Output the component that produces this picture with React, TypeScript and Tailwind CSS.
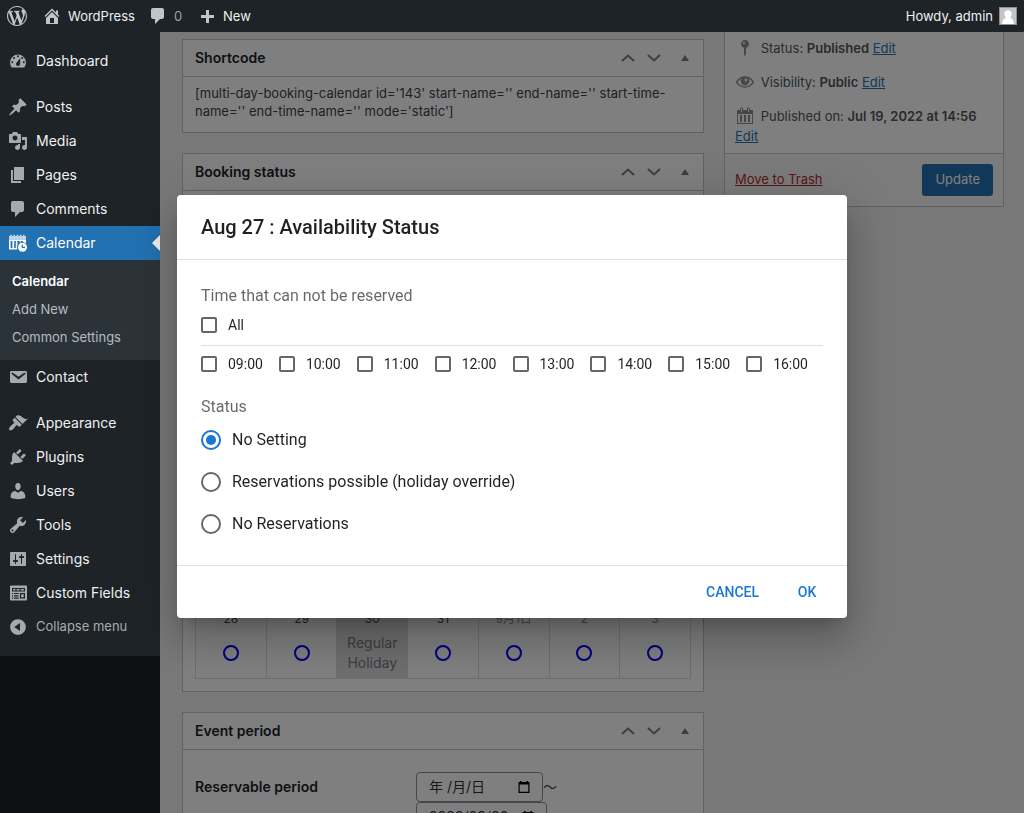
import { useState } from 'react'
import type { ReactNode } from 'react'

const icons = {
  wordpress:
    'M20 10c0-5.51-4.49-10-10-10C4.48 0 0 4.49 0 10c0 5.52 4.48 10 10 10 5.51 0 10-4.48 10-10zM7.78 15.37L4.37 6.22c.55-.02 1.17-.08 1.17-.08.5-.06.44-1.13-.06-1.11 0 0-1.45.11-2.37.11-.18 0-.37 0-.58-.01C4.12 2.69 6.87 1.11 10 1.11c2.33 0 4.45.87 6.05 2.34-.68-.11-1.65.39-1.65 1.58 0 .74.45 1.36.9 2.1.35.61.55 1.36.55 2.46 0 1.49-1.4 5-1.4 5l-3.03-8.37c.54-.02.82-.17.82-.17.5-.05.44-1.25-.06-1.22 0 0-1.44.12-2.38.12-.87 0-2.33-.12-2.33-.12-.5-.03-.56 1.2-.06 1.22l.92.08 1.26 3.41zM17.41 10c.24-.64.74-1.87.43-4.25.7 1.29 1.05 2.71 1.05 4.25 0 3.29-1.73 6.24-4.4 7.78.97-2.59 1.94-5.2 2.92-7.78zM6.1 18.09C3.12 16.65 1.11 13.53 1.11 10c0-1.3.23-2.48.72-3.59C3.25 10.3 4.67 14.2 6.1 18.09zm4.03-6.63l2.58 6.98c-.86.29-1.76.45-2.71.45-.79 0-1.57-.11-2.29-.33.81-2.38 1.62-4.74 2.42-7.1z',
  home: 'M16 8.5l1.53 1.53-1.06 1.06L10 4.6l-6.47 6.49-1.06-1.06L10 2.5l4 4v-2h2v4zm-6-2.46l6 5.99V18H4v-5.97zM12 17v-5H8v5h4z',
  plus: 'M17 7v3h-5v5H9v-5H4V7h5V2h3v5h5z',
  dashboard:
    'M3.76 16.5h12.48A8 8 0 1 0 3.76 16.5zM10 4.2a1 1 0 1 1 0 2 1 1 0 0 1 0-2zM6 6a1 1 0 1 1 0 2 1 1 0 0 1 0-2zM14.200 6a1 1 0 1 1 0 2 1 1 0 0 1 0-2zM4.200 10.200a1 1 0 1 1 0 2 1 1 0 0 1 0-2zM15.800 10.200a1 1 0 1 1 0 2 1 1 0 0 1 0-2zM12.300 7l-.3 6.400a2 2 0 1 1-3.500-1.600z',
  posts:
    'M10.44 3.02l1.82-1.82 6.36 6.35-1.83 1.82c-1.05-.68-2.48-.57-3.41.36l-.75.75c-.92.93-1.04 2.35-.35 3.41l-1.83 1.82-2.41-2.41-2.8 2.79c-.42.42-3.38 2.71-3.8 2.29s1.86-3.39 2.28-3.81l2.79-2.79L4.1 9.36l1.83-1.82c1.05.69 2.48.57 3.4-.36l.75-.75c.93-.92 1.05-2.35.36-3.41z',
  media:
    'M13 11V4c0-.55-.45-1-1-1h-1.67L9 1H5L3.67 3H2c-.55 0-1 .45-1 1v7c0 .55.45 1 1 1h10c.55 0 1-.45 1-1zM7 4.5c1.38 0 2.5 1.12 2.5 2.5S8.38 9.5 7 9.5 4.5 8.38 4.5 7 5.62 4.5 7 4.5zM14 6h5v10.5c0 1.38-1.12 2.5-2.5 2.5S14 17.88 14 16.5s1.12-2.5 2.5-2.5c.17 0 .34.02.5.05V9h-3V6zm-4 8.05V13h2v3.5c0 1.38-1.12 2.5-2.5 2.5S7 17.88 7 16.5 8.12 14 9.5 14c.17 0 .34.02.5.05z',
  pages: 'M6 15V2h10v13H6zm-1 1h8v2H3V5h2v11z',
  comments: 'M5 2h9c1.1 0 2 .9 2 2v7c0 1.1-.9 2-2 2h-2l-5 5v-5H5c-1.1 0-2-.9-2-2V4c0-1.1.9-2 2-2z',
  contact:
    'M3.87 4h13.25C18.37 4 19 4.59 19 5.79v8.42c0 1.19-.63 1.79-1.88 1.79H3.87c-1.25 0-1.88-.6-1.88-1.79V5.79c0-1.2.63-1.79 1.88-1.79zm6.62 8.6l6.74-5.53c.24-.2.43-.66.13-1.07-.29-.41-.82-.42-1.17-.17l-5.7 3.86L4.8 5.83c-.35-.25-.88-.24-1.17.17-.3.41-.11.87.13 1.07z',
  appearance:
    'M14.48 11.06L7.41 3.99l1.5-1.5c.5-.56 2.3-.47 3.51.32 1.21.8 1.43 1.28 2.91 2.1 1.18.64 2.45 1.26 4.45.85zm-.71.71L6.7 4.7 4.93 6.47c-.39.39-.39 1.02 0 1.41l1.06 1.06c.39.39.39 1.03 0 1.42-.6.6-1.43 1.11-2.21 1.69-.35.26-.7.53-1.01.84C1.43 14.23.4 16.08 1.4 17.07c.99 1 2.84-.03 4.18-1.36.31-.31.58-.66.85-1.02.57-.78 1.08-1.61 1.69-2.21.39-.39 1.02-.39 1.41 0l1.06 1.06c.39.39 1.02.39 1.41 0z',
  plugins:
    'M13.11 4.36L9.87 7.6 8 5.73l3.24-3.24c.35-.34 1.05-.2 1.56.32.52.51.66 1.21.31 1.55zm-8 1.77l.91-1.12 9.01 9.01-1.19.84c-.71.71-2.63 1.16-3.82 1.16H6.14L4.9 17.26c-.59.59-1.54.59-2.12 0-.59-.58-.59-1.53 0-2.12l1.24-1.24v-3.88c0-1.13.4-3.19 1.09-3.89zm7.26 3.97l3.24-3.24c.34-.35 1.04-.21 1.55.31.52.51.66 1.21.31 1.55l-3.24 3.25z',
  users:
    'M10 9.25c-2.27 0-2.73-3.44-2.73-3.44C7 4.02 7.82 2 9.97 2c2.16 0 2.98 2.02 2.71 3.81 0 0-.41 3.44-2.68 3.44zm0 2.57L12.72 10c2.39 0 4.52 2.33 4.52 4.53v2.49s-3.65 1.13-7.24 1.13c-3.65 0-7.24-1.13-7.24-1.13v-2.49c0-2.25 1.94-4.48 4.47-4.48z',
  tools:
    'M16.68 9.77c-1.34 1.34-3.3 1.67-4.95.99l-5.41 6.52c-.99.99-2.59.99-3.58 0s-.99-2.59 0-3.57l6.52-5.42c-.68-1.65-.35-3.61.99-4.95 1.28-1.28 3.12-1.62 4.72-1.06l-2.89 2.89 2.82 2.82 2.86-2.87c.53 1.58.18 3.39-1.08 4.65zM3.81 16.21c.4.39 1.04.39 1.43 0 .4-.4.4-1.04 0-1.43-.39-.4-1.03-.4-1.43 0-.39.39-.39 1.03 0 1.43z',
  settings:
    'M18 16V4c0-.55-.45-1-1-1H3c-.55 0-1 .45-1 1v12c0 .55.45 1 1 1h14c.55 0 1-.45 1-1zM8 11h1c.55 0 1 .45 1 1s-.45 1-1 1H8v1.5c0 .28-.22.5-.5.5s-.5-.22-.5-.5V13H6c-.55 0-1-.45-1-1s.45-1 1-1h1V5.5c0-.28.22-.5.5-.5s.5.22.5.5V11zm5-2h-1c-.55 0-1-.45-1-1s.45-1 1-1h1V5.5c0-.28.22-.5.5-.5s.5.22.5.5V7h1c.55 0 1 .45 1 1s-.45 1-1 1h-1v5.5c0 .28-.22.5-.5.5s-.5-.22-.5-.5V9z',
  fields:
    'M3 2.5h15c.55 0 1 .45 1 1v13c0 .55-.45 1-1 1H3c-.55 0-1-.45-1-1v-13c0-.55.45-1 1-1zM4 5v3.5h13V5zM5 6h2.400v1.500H5zm3.600 0H11.500v1.500H8.600zm4.100 0h3.200v1.500h-3.200zM4 10v1.1h1.1V10zm2 0v1.1h4.600V10zm-2 2.300v1.1h1.1v-1.1zm2 0v1.1h4.600v-1.1zm-2 2.300v1.1h1.1v-1.1zm2 0v1.1h4.600v-1.1zM11.900 10v5.500H17V10zm1.200 1.300h2.700v2.900h-2.700z',
  collapse:
    'M10 2.16c4.33 0 7.84 3.51 7.84 7.84s-3.51 7.84-7.84 7.84S2.16 14.33 2.16 10 5.67 2.16 10 2.16zm2 11.72V6.12L6.18 9.97z',
  pin: 'M14 6c0 1.86-1.28 3.41-3 3.86V16c0 1-2 2-2 2V9.86c-1.72-.45-3-2-3-3.86 0-2.21 1.79-4 4-4s4 1.79 4 4zM8 5c0 .55.45 1 1 1s1-.45 1-1-.45-1-1-1-1 .45-1 1z',
  eye: 'M10 4.200c-3.800 0-7 2-9.300 5.900 2.300 3.800 5.500 5.700 9.300 5.700s7-1.900 9.300-5.700C17 6.200 13.800 4.200 10 4.200zM10 14.600c-3 0-5.500-1.500-7.500-4.500C3.700 8.400 5.200 7.200 6.900 6.500a4.100 4.100 0 1 0 6.200 0c1.700.7 3.200 1.900 4.400 3.600-2 3-4.500 4.500-7.500 4.500zM10.900 6.600a1.400 1.400 0 1 1 0 2.800 1.400 1.400 0 0 1 0-2.800z',
  date: 'M15 4h3v14H2V4h3V3c0-.83.67-1.5 1.5-1.5S8 2.17 8 3v1h4V3c0-.83.67-1.5 1.5-1.5S15 2.17 15 3v1zM6 3v2.5c0 .28.22.5.5.5s.5-.22.5-.5V3c0-.28-.22-.5-.5-.5S6 2.72 6 3zm7 0v2.5c0 .28.22.5.5.5s.5-.22.5-.5V3c0-.28-.22-.5-.5-.5s-.5.22-.5.5zm4 14V8H3v9h14zM7 16V9H5v7h2zm4 0V9H9v7h2zm4 0V9h-2v7h2z',
}

type IconName = keyof typeof icons

function Icon({ name, className = '' }: { name: IconName; className?: string }) {
  return (
    <svg viewBox="0 0 20 20" className={`size-5 shrink-0 ${className}`} fill="currentColor" fillRule="evenodd" aria-hidden="true">
      <path d={icons[name]} />
    </svg>
  )
}

// Calendar with a small clock in the corner
function BookingIcon() {
  return (
    <svg viewBox="0 0 20 20" className="size-5 shrink-0" aria-hidden="true">
      <path fill="#fff" fillOpacity=".7" d="M1 3h1.200V1.800h1.600V3h1.600V1.800H7V3h1.600V1.800h1.600V3h1.600V1.800h1.600V3H15V1.800h1.600V3H18v3.400H1z" />
      <path fill="#fff" fillRule="evenodd" d="M1 6.400h17v4a5.600 5.600 0 0 0-3-1.300V8h-2.200v1.300l-1 .6V8H9.400v4.300a5.400 5.400 0 0 0-.2 4.200H1zM2.600 8v7h1.800V8zm3.600 0v7h1.600V8z" />
      <circle cx="14.500" cy="14.200" r="4.500" fill="#fff" />
      <path d="M14.300 11.400v3h2.700" fill="none" stroke="#2271b1" strokeWidth="1.200" />
    </svg>
  )
}

function MenuItem({ icon, label }: { icon: IconName; label: string }) {
  return (
    <a href="#" className="flex h-[34px] items-center gap-2 px-2 text-sm text-[#f0f0f1]">
      <Icon name={icon} className="text-[#a7aaad]" />
      {label}
    </a>
  )
}

function Sidebar() {
  return (
    <nav className="relative z-30 bg-[#1d2327] pt-3 pb-3">
      <MenuItem icon="dashboard" label="Dashboard" />
      <div className="mt-3">
        <MenuItem icon="posts" label="Posts" />
        <MenuItem icon="media" label="Media" />
        <MenuItem icon="pages" label="Pages" />
        <MenuItem icon="comments" label="Comments" />
        <a href="#" className="relative flex h-[34px] items-center gap-2 bg-[#2271b1] px-2 text-sm text-white">
          <BookingIcon />
          Calendar
          <span className="absolute top-1/2 right-0 -translate-y-1/2 border-8 border-l-0 border-transparent border-r-[#f0f0f1]" />
        </a>
        <div className="flex h-[100px] flex-col bg-[#2c3338] px-3 pt-[7px] text-[13px] leading-7 text-[#b5bcc2]">
          <a href="#" className="font-semibold text-white">Calendar</a>
          <a href="#">Add New</a>
          <a href="#">Common Settings</a>
        </div>
        <MenuItem icon="contact" label="Contact" />
      </div>
      <div className="mt-3">
        <MenuItem icon="appearance" label="Appearance" />
        <MenuItem icon="plugins" label="Plugins" />
        <MenuItem icon="users" label="Users" />
        <MenuItem icon="tools" label="Tools" />
        <MenuItem icon="settings" label="Settings" />
        <MenuItem icon="fields" label="Custom Fields" />
      </div>
      <button className="flex h-[34px] w-full items-center gap-2 px-2 text-[13px] text-[#a7aaad]">
        <Icon name="collapse" />
        Collapse menu
      </button>
    </nav>
  )
}

function AdminBar() {
  return (
    <header className="relative z-30 flex h-8 shrink-0 items-center bg-[#1d2327] px-[7px] text-[13px] leading-8 text-[#f0f0f1]">
      <a href="#" aria-label="About WordPress" className="text-[#c3c4c7]">
        <Icon name="wordpress" />
      </a>
      <a href="#" className="ml-[15px] flex items-center gap-1.5">
        <Icon name="home" className="text-[#c3c4c7]" />
        WordPress
      </a>
      <a href="#" className="ml-[13px] flex items-center gap-1.5 text-[#9ca2a7]">
        <Icon name="comments" className="text-[#c3c4c7]" />
        0
      </a>
      <a href="#" className="ml-[15px] flex items-center gap-1.5">
        <Icon name="plus" className="mt-1 text-[#c3c4c7]" />
        New
      </a>
      <a href="#" className="ml-auto flex items-center gap-1.5">
        Howdy, admin
        <svg viewBox="0 0 18 18" className="size-[18px]" aria-hidden="true">
          <rect width="18" height="18" fill="#8c8f94" />
          <rect x="1" y="1" width="16" height="16" fill="#c5c5c5" />
          <path d="M9 3.2c2.3 0 3.7 1.700 3.700 3.900 0 1.500-.7 2.900-1.700 3.700 2.200.7 3.500 2.600 4 6.200H3c.5-3.600 1.800-5.500 4-6.200-1-.8-1.700-2.200-1.700-3.700C5.300 4.900 6.700 3.200 9 3.200z" fill="#fff" />
        </svg>
      </a>
    </header>
  )
}

function Postbox({ title, children }: { title: string; children: ReactNode }) {
  return (
    <section className="border border-[#c3c4c7] bg-white">
      <div className="flex h-[37px] items-center border-b border-[#c3c4c7] px-3">
        <h2 className="flex-1 text-sm font-semibold text-[#1d2327]">{title}</h2>
        <div className="flex items-center text-[#787c82]">
          <button aria-label="Move up" className="flex w-[26px] justify-center">
            <svg viewBox="0 0 14 8" className="h-2 w-3.5" fill="none" stroke="currentColor" strokeWidth="2"><path d="M1 7l6-5.500L13 7" /></svg>
          </button>
          <button aria-label="Move down" className="flex w-[26px] justify-center">
            <svg viewBox="0 0 14 8" className="h-2 w-3.5" fill="none" stroke="currentColor" strokeWidth="2"><path d="M1 1l6 5.500L13 1" /></svg>
          </button>
          <button aria-label="Toggle panel" className="ml-3 flex w-3 justify-center">
            <svg viewBox="0 0 8 6" className="h-1.5 w-2" fill="currentColor"><path d="M4 0l4 6H0z" /></svg>
          </button>
        </div>
      </div>
      {children}
    </section>
  )
}

const lastWeek = [
  { date: '28' },
  { date: '29' },
  { date: '30', holiday: true },
  { date: '31' },
  { date: '9月1日', nextMonth: true },
  { date: '2', nextMonth: true },
  { date: '3', nextMonth: true },
]

function BookingCalendar() {
  return (
    <div className="flex min-h-[500px] flex-col justify-end p-3">
      <table className="w-full table-fixed border-collapse text-center">
        <tbody>
          <tr className="h-[74px]">
            {lastWeek.map(({ date, holiday, nextMonth }) => (
              <td key={date} className={`border border-[#dcdcde] p-0 align-top ${holiday ? 'bg-[#dcdcde]' : ''}`}>
                <div className={`h-7 pt-1 text-xs leading-5 ${nextMonth ? 'text-[#8c8f94]' : 'text-[#3c434a]'}`}>{date}</div>
                {holiday ? (
                  <div className="text-sm leading-5 text-[#787c82]">Regular<br />Holiday</div>
                ) : (
                  <div className="flex h-10 items-center justify-center">
                    <span className="size-4 rounded-full border-2 border-[#0000ff]" />
                  </div>
                )}
              </td>
            ))}
          </tr>
        </tbody>
      </table>
    </div>
  )
}

function DateInput({ label, value, className }: { label: string; value: string; className: string }) {
  return (
    <label className={`flex h-[30px] items-center rounded border border-[#8c8f94] px-3 ${className}`}>
      <input aria-label={label} defaultValue={value} className="w-0 flex-1 bg-transparent text-sm text-[#2c3338] outline-none" />
      <svg viewBox="0 0 12 12" className="size-3" aria-hidden="true">
        <path d="M2 0h1.500v1h5V0H10v1h1.500v11H.5V1H2zM1.700 3.600v7.200h8.600V3.600z" fill="#000" fillRule="evenodd" />
      </svg>
    </label>
  )
}

function EventPeriod() {
  return (
    <div className="flex px-3 pt-[22px]">
      <h3 className="w-[221px] pt-[5px] text-sm font-semibold text-[#1d2327]">Reservable period</h3>
      <div>
        <div className="flex items-center text-sm">
          <DateInput label="Start date" value="年 /月/日" className="w-[127px]" />
          〜
        </div>
        <DateInput label="End date" value="2022/09/30" className="w-[131px]" />
      </div>
    </div>
  )
}

function PublishBox() {
  return (
    <aside className="border border-t-0 border-[#c3c4c7] bg-white text-[13px] text-[#50575e]">
      <div className="flex flex-col gap-3.5 px-2.5 pt-1.5 pb-[7px] leading-5 [&_a]:text-[#2271b1] [&_a]:underline [&_b]:font-semibold">
        <p><Icon name="pin" className="mr-0.5 inline align-top text-[#8c8f94]" /> Status: <b>Published</b> <a href="#">Edit</a></p>
        <p><Icon name="eye" className="mr-0.5 inline align-top text-[#8c8f94]" /> Visibility: <b>Public</b> <a href="#">Edit</a></p>
        <p><Icon name="date" className="mr-0.5 inline align-top text-[#8c8f94]" /> Published on: <b>Jul 19, 2022 at 14:56</b> <a href="#">Edit</a></p>
      </div>
      <div className="flex items-center justify-between border-t border-[#c3c4c7] bg-[#f6f7f7] p-2.5">
        <a href="#" className="text-[#b32d2e] underline">Move to Trash</a>
        <button className="h-8 rounded-[3px] bg-[#2271b1] px-[13px] text-white">Update</button>
      </div>
    </aside>
  )
}

const hours = ['09:00', '10:00', '11:00', '12:00', '13:00', '14:00', '15:00', '16:00']
const statuses = ['No Setting', 'Reservations possible (holiday override)', 'No Reservations']

function Checkbox({ label }: { label: string }) {
  return (
    <label className="flex items-center gap-[11px] text-sm leading-5">
      <input type="checkbox" className="size-4 appearance-none rounded-xs border-2 border-black/60 checked:bg-[#1976d2]" />
      {label}
    </label>
  )
}

function AvailabilityDialog() {
  const [status, setStatus] = useState(statuses[0])

  return (
    <div
      role="dialog"
      aria-labelledby="dialog-title"
      className="w-full max-w-[670px] rounded bg-white font-[Roboto,sans-serif] text-black/87 shadow-[0_11px_15px_-7px_rgba(0,0,0,0.2),0_24px_38px_3px_rgba(0,0,0,0.14),0_9px_46px_8px_rgba(0,0,0,0.12)]"
    >
      <h2 id="dialog-title" className="px-6 py-4 text-xl leading-8 font-medium">Aug 27 : Availability Status</h2>
      <div className="border-y border-black/12 px-6 pt-6 pb-5">
        <fieldset>
          <legend className="text-base text-black/60">Time that can not be reserved</legend>
          <div className="border-b border-black/12 pt-[7px] pb-2.5">
            <Checkbox label="All" />
          </div>
          <div className="flex flex-wrap gap-x-4 gap-y-2 pt-2">
            {hours.map((hour) => <Checkbox key={hour} label={hour} />)}
          </div>
        </fieldset>
        <fieldset className="mt-[21px]">
          <legend className="text-base text-black/60">Status</legend>
          {statuses.map((item) => (
            <label key={item} className="flex h-[42px] items-center gap-[11px] text-base">
              <input
                type="radio"
                name="status"
                checked={status === item}
                onChange={() => setStatus(item)}
                className="flex size-5 appearance-none items-center justify-center rounded-full border-2 border-black/60 checked:border-[#1976d2] checked:before:size-2.5 checked:before:rounded-full checked:before:bg-[#1976d2]"
              />
              {item}
            </label>
          ))}
        </fieldset>
      </div>
      <div className="flex justify-end gap-2 p-2 text-sm font-medium text-[#1976d2]">
        <button className="h-9 min-w-16 rounded px-2">CANCEL</button>
        <button className="h-9 min-w-16 rounded px-2">OK</button>
      </div>
    </div>
  )
}

export default function App() {
  return (
    <div className="flex h-screen flex-col overflow-hidden bg-[#f0f0f1] font-[Inter,'Noto_Sans_CJK_JP',sans-serif] text-[#3c434a]">
      <AdminBar />
      <div className="flex min-h-0 flex-1">
        <div className="w-40 shrink-0 bg-[#1d2327]">
          <Sidebar />
        </div>
        <main className="flex min-w-0 flex-1 items-start gap-5 overflow-hidden pr-5 pl-[22px]">
          <div className="flex min-w-0 flex-1 flex-col gap-5 pt-[7px]">
            <Postbox title="Shortcode">
              <p className="px-3 pt-[7px] pb-3 text-[13px] leading-[18px]">
                [multi-day-booking-calendar id='143' start-name='' end-name='' start-time-name='' end-time-name='' mode='static']
              </p>
            </Postbox>
            <Postbox title="Booking status">
              <BookingCalendar />
            </Postbox>
            <Postbox title="Event period">
              <EventPeriod />
            </Postbox>
          </div>
          <div className="w-[280px] shrink-0">
            <PublishBox />
          </div>
        </main>
      </div>
      <div className="fixed inset-0 z-20 bg-black/50" />
      <div className="pointer-events-none fixed inset-0 z-40 flex items-center justify-center *:pointer-events-auto">
        <AvailabilityDialog />
      </div>
    </div>
  )
}
